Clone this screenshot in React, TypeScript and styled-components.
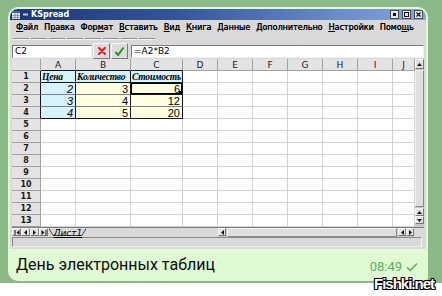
import styled, { createGlobalStyle } from 'styled-components';

const GlobalStyle = createGlobalStyle`
  html, body {
    margin: 0;
    padding: 0;
  }
  body {
    width: 442px;
    height: 296px;
    overflow: hidden;
    background: #ffffff;
    font-family: "DejaVu Sans", sans-serif;
  }
`;

const Page = styled.div`
  position: relative;
  width: 442px;
  height: 296px;
  background: #ffffff;
`;

const Chat = styled.div`
  height: 283px;
  box-sizing: border-box;
  padding: 7px 0 0 8px;
  background: #8cba87;
`;

const Bubble = styled.div`
  width: 420px;
  height: 274px;
  box-sizing: border-box;
  padding: 2px 2px 0 2px;
  display: flex;
  flex-direction: column;
  background: #e0fad4;
  border-radius: 10px 10px 4px 10px;
  overflow: hidden;
`;

const Window = styled.div`
  width: 416px;
  height: 240px;
  display: flex;
  flex-direction: column;
  background: #d9d9d9;
  border-radius: 8px 8px 0 0;
  overflow: hidden;
`;

const TitleBar = styled.div`
  height: 11px;
  flex: none;
  display: flex;
  align-items: center;
  gap: 3px;
  padding: 0 3px 0 2px;
  color: #ffffff;
  font: bold 8px "DejaVu Sans", sans-serif;
  background-image: radial-gradient(rgba(255, 255, 255, 0.22) 0.6px, transparent 0.7px),
    linear-gradient(90deg, #1c3674 0%, #34559c 40%, #6b8dc9 80%, #86a5da 100%);
  background-size: 2px 2px, auto;
`;

const Title = styled.span`
  flex: 1;
  line-height: 11px;
`;

const WinButton = styled.div`
  width: 7px;
  height: 7px;
  display: flex;
  align-items: center;
  justify-content: center;
  background: #e4e4e4;
  border: 1px solid #4a4a4a;
`;

const Body = styled.div`
  flex: 1;
  display: flex;
  flex-direction: column;
  padding: 0 2px 2px;
`;

const MenuBar = styled.div`
  height: 14px;
  display: flex;
  align-items: center;
  gap: 6px;
  padding-left: 4px;
  font: 8px "DejaVu Sans", sans-serif;
  color: #000;
  white-space: nowrap;
  text-shadow: 0.3px 0 0 #000;
  u {
    text-underline-offset: 1px;
  }
`;

const ToolStrip = styled.div`
  height: 9px;
  display: flex;
  align-items: center;
  gap: 2px;
  padding-left: 1px;
`;

const Handle = styled.div`
  width: 16px;
  height: 1px;
  background: #8e8e8e;
  border-bottom: 1px solid #f4f4f4;
`;

const FormulaRow = styled.div`
  height: 16px;
  display: flex;
  align-items: center;
  gap: 1px;
`;

const Field = styled.div<{ $w?: number }>`
  ${(p) => (p.$w ? `width: ${p.$w}px;` : 'flex: 1;')}
  height: 11px;
  box-sizing: content-box;
  padding: 0 2px;
  display: flex;
  align-items: center;
  background: #ffffff;
  border: 1px solid;
  border-color: #7a7a7a #f0f0f0 #f0f0f0 #7a7a7a;
  font: 9px "DejaVu Sans", sans-serif;
  color: #000;
`;

const ToolButton = styled.div`
  width: 15px;
  height: 14px;
  display: flex;
  align-items: center;
  justify-content: center;
  background: #dcdcdc;
  border: 1px solid;
  border-color: #f6f6f6 #7a7a7a #7a7a7a #f6f6f6;
`;

const SheetArea = styled.div`
  height: 168px;
  display: flex;
`;

const Grid = styled.div`
  display: grid;
  grid-template-columns: 29px 35px 55px 52px repeat(6, 35px) 22px;
  grid-auto-rows: 12px;
  background: #ffffff;
  overflow: hidden;
`;

const HeadCell = styled.div<{ $dark?: boolean; $row?: boolean }>`
  box-sizing: border-box;
  display: flex;
  align-items: center;
  justify-content: center;
  background: #e3e3e3;
  border-right: 1px solid ${(p) => (p.$dark && p.$row ? '#15151f' : '#a2a2a2')};
  border-bottom: 1px solid ${(p) => (p.$dark && !p.$row ? '#15151f' : '#a2a2a2')};
  font: ${(p) => (p.$row ? 'bold 8px' : '9px')} "DejaVu Sans", sans-serif;
  color: #1a1a1a;
`;

const Cell = styled.div<{
  $bg?: string;
  $right?: string;
  $bottom?: string;
  $serif?: boolean;
  $italic?: boolean;
  $align?: 'left' | 'right';
  $selected?: boolean;
}>`
  position: relative;
  box-sizing: border-box;
  padding: 0 ${(p) => (p.$serif ? 0 : 2)}px 0 1px;
  display: flex;
  align-items: center;
  justify-content: ${(p) => (p.$align === 'right' ? 'flex-end' : 'flex-start')};
  background: ${(p) => p.$bg || '#ffffff'};
  border-right: 1px solid ${(p) => p.$right || '#d2d2d2'};
  border-bottom: 1px solid ${(p) => p.$bottom || '#d2d2d2'};
  box-shadow: ${(p) => (p.$selected ? 'inset 0 0 0 1px #000' : 'none')};
  font: ${(p) => (p.$serif ? 'italic bold 9.5px "Liberation Serif", serif' : `${p.$italic ? 'italic ' : ''}11px "Liberation Sans", sans-serif`)};
  letter-spacing: ${(p) => (p.$serif ? '-0.2px' : '0')};
  color: #000;
  white-space: nowrap;
  overflow: hidden;
`;

const FillHandle = styled.span`
  position: absolute;
  right: 0;
  bottom: 0;
  width: 3px;
  height: 3px;
  background: #000;
`;

const VScroll = styled.div`
  width: 9px;
  display: flex;
  flex-direction: column;
  background: #c9c9c9;
`;

const Arrow = styled.div<{ $w?: number; $h?: number }>`
  width: ${(p) => p.$w ?? 9}px;
  height: ${(p) => p.$h ?? 9}px;
  box-sizing: border-box;
  flex: none;
  display: flex;
  align-items: center;
  justify-content: center;
  background: #e2e2e2;
  border: 1px solid;
  border-color: #fafafa #777 #777 #fafafa;
`;

const Trough = styled.div<{ $horizontal?: boolean }>`
  flex: 1;
  display: flex;
  padding: ${(p) => (p.$horizontal ? '0 1px' : '1px 0')};
  background: #c4c4c4;
`;

const Slider = styled.div`
  flex: 1;
  background: #dedede;
  border: 1px solid;
  border-color: #f4f4f4 #8a8a8a #8a8a8a #f4f4f4;
`;

const TabBar = styled.div`
  height: 9px;
  display: flex;
  align-items: stretch;
  background: #d9d9d9;
  border-top: 1px solid #7c7c7c;
`;

const Nav = styled.div`
  display: flex;
`;

const SheetTab = styled.div`
  position: relative;
  width: 38px;
  display: flex;
  align-items: center;
  justify-content: center;
  margin-left: 1px;
  font: italic 9px "DejaVu Sans", sans-serif;
  text-decoration: underline;
  color: #000;
  svg {
    position: absolute;
    inset: 0;
  }
  span {
    position: relative;
    line-height: 8px;
  }
`;

const HScroll = styled.div`
  width: 196px;
  margin-left: auto;
  display: flex;
  background: #c4c4c4;
`;

const Corner = styled.div`
  width: 10px;
  background: #d9d9d9;
`;

const StatusBar = styled.div`
  height: 10px;
  display: flex;
  align-items: center;
  padding: 1px 0;
  box-sizing: border-box;
`;

const StatusPanel = styled.div`
  flex: 1;
  height: 8px;
  margin-right: 2px;
  border: 1px solid;
  border-color: #8a8a8a #f2f2f2 #f2f2f2 #8a8a8a;
`;

const Caption = styled.div`
  flex: 1;
  display: flex;
  align-items: flex-end;
  justify-content: space-between;
  padding: 0 8px 6px 6px;
`;

const CaptionText = styled.span`
  font: 16px Roboto, "Noto Sans", sans-serif;
  color: #0c0c0c;
  line-height: 20px;
`;

const Meta = styled.span`
  display: flex;
  align-items: center;
  gap: 4px;
  font: 13px Roboto, "Noto Sans", sans-serif;
  color: #5daf5f;
  line-height: 16px;
`;

const Watermark = styled.div`
  position: absolute;
  right: 8px;
  bottom: 4px;
  font: bold 15px "Liberation Sans", Arial, sans-serif;
  letter-spacing: -1px;
  color: #ffffff;
  text-shadow: 1px 0 0 #000, -1px 0 0 #000, 0 1px 0 #000, 0 -1px 0 #000, 1px 1px 0 #000,
    -1px -1px 0 #000, 1px -1px 0 #000, -1px 1px 0 #000;
`;

const menu: [string, string, string][] = [
  ['', 'Ф', 'айл'],
  ['П', 'р', 'авка'],
  ['Фор', 'м', 'ат'],
  ['', 'В', 'ставить'],
  ['', 'В', 'ид'],
  ['', 'К', 'нига'],
  ['', 'Д', 'анные'],
  ['Дополнительно', '', ''],
  ['', 'Н', 'астройки'],
  ['Помо', 'щ', 'ь'],
];

const columns = ['A', 'B', 'C', 'D', 'E', 'F', 'G', 'H', 'I', 'J'];

const CYAN = '#d6f3fb';
const CREAM = '#fefee2';
const DARK = '#15151f';

type Data = { text: string; bg: string; serif?: boolean; italic?: boolean; right?: boolean };

const table: Data[][] = [
  [
    { text: 'Цена', bg: CYAN, serif: true },
    { text: 'Количество', bg: CYAN, serif: true },
    { text: 'Стоимость', bg: CYAN, serif: true },
  ],
  [
    { text: '2', bg: CYAN, italic: true, right: true },
    { text: '3', bg: CREAM, right: true },
    { text: '6', bg: CREAM, right: true },
  ],
  [
    { text: '3', bg: CYAN, italic: true, right: true },
    { text: '4', bg: CREAM, right: true },
    { text: '12', bg: CREAM, right: true },
  ],
  [
    { text: '4', bg: CYAN, italic: true, right: true },
    { text: '5', bg: CREAM, right: true },
    { text: '20', bg: CREAM, right: true },
  ],
];

const Tri = ({ dir, size = 5 }: { dir: 'up' | 'down' | 'left' | 'right'; size?: number }) => {
  const pts = {
    up: '0,4 2.5,1 5,4',
    down: '0,1 2.5,4 5,1',
    left: '4,0 1,2.5 4,5',
    right: '1,0 4,2.5 1,5',
  }[dir];
  return (
    <svg width={size} height={size} viewBox="0 0 5 5">
      <polygon points={pts} fill="#111" />
    </svg>
  );
};

const NavEnd = ({ dir }: { dir: 'left' | 'right' }) => (
  <svg width="6" height="5" viewBox="0 0 6 5">
    {dir === 'left' ? (
      <>
        <rect x="0.5" y="0" width="1" height="5" fill="#111" />
        <polygon points="5.5,0 2.5,2.5 5.5,5" fill="#111" />
      </>
    ) : (
      <>
        <polygon points="0.5,0 3.5,2.5 0.5,5" fill="#111" />
        <rect x="4.5" y="0" width="1" height="5" fill="#111" />
      </>
    )}
  </svg>
);

export default function App() {
  const rows = Array.from({ length: 13 }, (_, i) => i + 1);

  return (
    <Page>
      <GlobalStyle />
      <Chat>
        <Bubble>
          <Window>
            <TitleBar>
              <svg width="8" height="8" viewBox="0 0 8 8">
                <rect x="0" y="0" width="8" height="8" fill="#e8e8e8" />
                <rect x="0" y="0" width="8" height="2" fill="#3a6ab8" />
                <path d="M0 4.5H8M0 6.5H8M3 2V8M5.5 2V8" stroke="#6a6a6a" strokeWidth="0.6" />
              </svg>
              <svg width="5" height="5" viewBox="0 0 5 5">
                <rect x="0" y="1.5" width="5" height="2" fill="#c8c8c8" />
              </svg>
              <Title>KSpread</Title>
              <WinButton>
                <svg width="3" height="3" viewBox="0 0 3 3">
                  <rect width="3" height="3" fill="#111" />
                </svg>
              </WinButton>
              <WinButton>
                <svg width="5" height="5" viewBox="0 0 5 5">
                  <rect x="0.5" y="0.5" width="4" height="4" fill="none" stroke="#111" />
                </svg>
              </WinButton>
              <WinButton>
                <svg width="5" height="5" viewBox="0 0 5 5">
                  <path d="M0.5 0.5L4.5 4.5M4.5 0.5L0.5 4.5" stroke="#111" strokeWidth="1.2" />
                </svg>
              </WinButton>
            </TitleBar>

            <Body>
              <MenuBar>
                {menu.map(([a, u, b]) => (
                  <span key={a + u + b}>
                    {a}
                    {u && <u>{u}</u>}
                    {b}
                  </span>
                ))}
              </MenuBar>

              <ToolStrip>
                {Array.from({ length: 8 }, (_, i) => (
                  <Handle key={i} />
                ))}
              </ToolStrip>

              <FormulaRow>
                <Field $w={74}>C2</Field>
                <ToolButton>
                  <svg width="10" height="10" viewBox="0 0 10 10">
                    <path d="M2 2L8 8M8 2L2 8" stroke="#e2232a" strokeWidth="2.2" strokeLinecap="round" />
                  </svg>
                </ToolButton>
                <ToolButton>
                  <svg width="11" height="11" viewBox="0 0 11 11">
                    <path d="M1.5 6L4.2 9L9.5 1.5" fill="none" stroke="#14a01a" strokeWidth="2" strokeLinejoin="round" />
                  </svg>
                </ToolButton>
                <Field style={{ marginLeft: 2 }}>=A2*B2</Field>
              </FormulaRow>

              <SheetArea>
                <Grid>
                  <HeadCell />
                  {columns.map((c, i) => (
                    <HeadCell key={c} $dark={i < 3}>
                      {c}
                    </HeadCell>
                  ))}
                  {rows.map((r) => (
                    <>
                      <HeadCell key={`h${r}`} $row $dark={r <= 4}>
                        {r}
                      </HeadCell>
                      {columns.map((c, ci) => {
                        const d = r <= 4 && ci < 3 ? table[r - 1][ci] : null;
                        if (!d) return <Cell key={c + r} />;
                        const selected = r === 2 && ci === 2;
                        return (
                          <Cell
                            key={c + r}
                            $bg={d.bg}
                            $right={DARK}
                            $bottom={r === 1 || r === 4 || selected ? DARK : '#7d7d85'}
                            $serif={d.serif}
                            $italic={d.italic}
                            $align={d.right ? 'right' : 'left'}
                            $selected={selected}
                          >
                            {d.text}
                            {selected && <FillHandle />}
                          </Cell>
                        );
                      })}
                    </>
                  ))}
                </Grid>
                <VScroll>
                  <Arrow $h={10}>
                    <Tri dir="up" />
                  </Arrow>
                  <Trough>
                    <Slider />
                  </Trough>
                  <Arrow $h={8}>
                    <Tri dir="up" />
                  </Arrow>
                  <Arrow $h={8}>
                    <Tri dir="down" />
                  </Arrow>
                  <div style={{ height: 3 }} />
                </VScroll>
              </SheetArea>

              <TabBar>
                <Nav>
                  <Arrow $w={9} $h={8}>
                    <NavEnd dir="left" />
                  </Arrow>
                  <Arrow $w={9} $h={8}>
                    <Tri dir="left" />
                  </Arrow>
                  <Arrow $w={9} $h={8}>
                    <Tri dir="right" />
                  </Arrow>
                  <Arrow $w={9} $h={8}>
                    <NavEnd dir="right" />
                  </Arrow>
                </Nav>
                <SheetTab>
                  <svg width="38" height="8" viewBox="0 0 38 8">
                    <path d="M0 0.5L4 7.5H33L37 0.5" fill="none" stroke="#222" strokeWidth="0.8" />
                  </svg>
                  <span>Лист1</span>
                </SheetTab>
                <HScroll>
                  <Arrow $w={8} $h={8}>
                    <Tri dir="left" />
                  </Arrow>
                  <Trough $horizontal>
                    <Slider />
                  </Trough>
                  <Arrow $w={8} $h={8}>
                    <Tri dir="left" />
                  </Arrow>
                  <Arrow $w={8} $h={8}>
                    <Tri dir="right" />
                  </Arrow>
                </HScroll>
                <Corner />
              </TabBar>

              <StatusBar>
                <StatusPanel />
              </StatusBar>
            </Body>
          </Window>

          <Caption>
            <CaptionText>День электронных таблиц</CaptionText>
            <Meta>
              08:49
              <svg width="12" height="10" viewBox="0 0 12 10">
                <path d="M1 5.2L4.3 8.4L11 1.5" fill="none" stroke="#5daf5f" strokeWidth="1.5" />
              </svg>
            </Meta>
          </Caption>
        </Bubble>
      </Chat>
      <Watermark>Fishki.net</Watermark>
    </Page>
  );
}
